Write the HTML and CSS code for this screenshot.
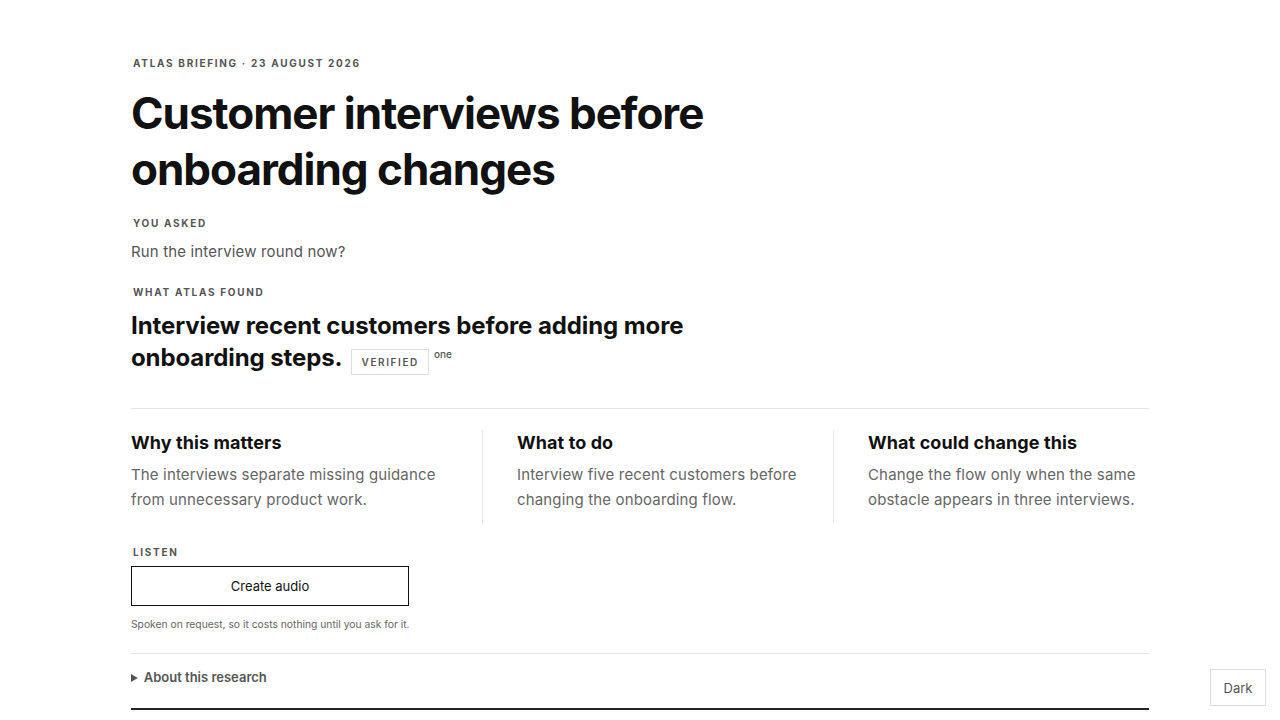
FILE: index.html
```html
<!DOCTYPE html>
<html lang="en">
<head>
<meta charset="utf-8">
<title>Atlas Briefing</title>
<link rel="stylesheet" href="styles.css">
</head>
<body>
<main class="page">
  <p class="label eyebrow">Atlas Briefing · 23 August 2026</p>
  <h1 class="title">Customer interviews before onboarding changes</h1>

  <p class="label asked-label">You asked</p>
  <p class="question">Run the interview round now?</p>

  <p class="label found-label">What Atlas found</p>
  <h2 class="answer">Interview recent customers before adding more onboarding steps.<span class="badge">Verified</span><sup class="note-ref">one</sup></h2>

  <hr class="rule">

  <section class="columns">
    <div class="col">
      <h3 class="col-title">Why this matters</h3>
      <p class="col-body">The interviews separate missing guidance from unnecessary product work.</p>
    </div>
    <div class="col col-ruled">
      <h3 class="col-title">What to do</h3>
      <p class="col-body">Interview five recent customers before changing the onboarding flow.</p>
    </div>
    <div class="col col-ruled">
      <h3 class="col-title">What could change this</h3>
      <p class="col-body">Change the flow only when the same obstacle appears in three interviews.</p>
    </div>
  </section>

  <p class="label listen-label">Listen</p>
  <button class="audio-btn" type="button">Create audio</button>
  <p class="audio-note">Spoken on request, so it costs nothing until you ask for it.</p>

  <hr class="rule rule-lower">

  <details class="about">
    <summary>About this research</summary>
  </details>

  <hr class="rule-heavy">
</main>
<button class="theme-btn" type="button">Dark</button>
</body>
</html>
```

FILE: styles.css
```css
* { box-sizing: border-box; }

html, body {
  margin: 0;
  padding: 0;
  background: #fff;
}

body {
  font-family: Inter, "Liberation Sans", Arial, sans-serif;
  color: #111;
  overflow: hidden;
}

.page {
  max-width: 1018px;
  margin: 0 auto;
  padding-top: 56px;
}

.label {
  margin: 0;
  padding-left: 2px;
  font-size: 10px;
  line-height: 14px;
  font-weight: 700;
  letter-spacing: 0.17em;
  text-transform: uppercase;
  color: #555;
}

.title {
  margin: 15px 0 0;
  max-width: 640px;
  font-size: 44px;
  line-height: 56px;
  font-weight: 700;
  letter-spacing: -0.023em;
  color: #111;
}

.asked-label { margin-top: 19px; }

.question {
  margin: 10px 0 0;
  font-size: 15px;
  line-height: 24px;
  letter-spacing: 0.01em;
  color: #555;
}

.found-label { margin-top: 21px; }

.answer {
  margin: 11px 0 0;
  max-width: 640px;
  font-size: 24px;
  line-height: 32px;
  font-weight: 700;
  letter-spacing: -0.004em;
  color: #111;
}

.badge {
  display: inline-block;
  margin-left: 8px;
  padding: 5px 9px 5px 10px;
  border: 1px solid #ddd;
  font-size: 10px;
  line-height: 14px;
  font-weight: 600;
  letter-spacing: 0.16em;
  text-transform: uppercase;
  color: #555;
}

.note-ref {
  margin-left: 5px;
  font-size: 10px;
  font-weight: 500;
  letter-spacing: 0;
  color: #555;
  vertical-align: 8px;
  line-height: 0;
}

.rule {
  margin: 33px 0 0;
  border: 0;
  border-top: 1px solid #e6e6e6;
  height: 0;
}

.columns {
  display: grid;
  grid-template-columns: repeat(3, 1fr);
  column-gap: 35px;
  margin-top: 21px;
}

.col {
  padding-top: 1px;
  padding-bottom: 11px;
}

.col-ruled {
  border-left: 1px solid #e6e6e6;
  padding-left: 34px;
}

.col-title {
  margin: 0;
  font-size: 18px;
  line-height: 24px;
  font-weight: 700;
  letter-spacing: 0.005em;
  color: #111;
}

.col-body {
  margin: 7px -12px 0 0;
  font-size: 15px;
  line-height: 25px;
  letter-spacing: 0.01em;
  color: #666;
}

.listen-label { margin-top: 22px; }

.audio-btn {
  display: block;
  margin-top: 7px;
  width: 278px;
  height: 40px;
  padding: 0;
  border: 1px solid #111;
  background: #fff;
  font-family: inherit;
  font-size: 13px;
  color: #111;
  cursor: pointer;
}

.audio-note {
  margin: 11px 0 0;
  font-size: 10.3px;
  line-height: 14px;
  color: #666;
}

.rule-lower { margin-top: 22px; }

.about {
  margin-top: 13px;
}

.about summary {
  font-size: 13px;
  line-height: 20px;
  font-weight: 600;
  color: #555;
  cursor: pointer;
}

.about summary::marker {
  font-size: 12px;
}

.rule-heavy {
  margin: 20px 0 0;
  border: 0;
  border-top: 2px solid #222;
  height: 0;
}

.theme-btn {
  position: fixed;
  right: 14px;
  bottom: 14px;
  width: 56px;
  height: 37px;
  padding: 0;
  border: 1px solid #ddd;
  background: #fff;
  font-family: inherit;
  font-size: 13px;
  color: #555;
}
```
